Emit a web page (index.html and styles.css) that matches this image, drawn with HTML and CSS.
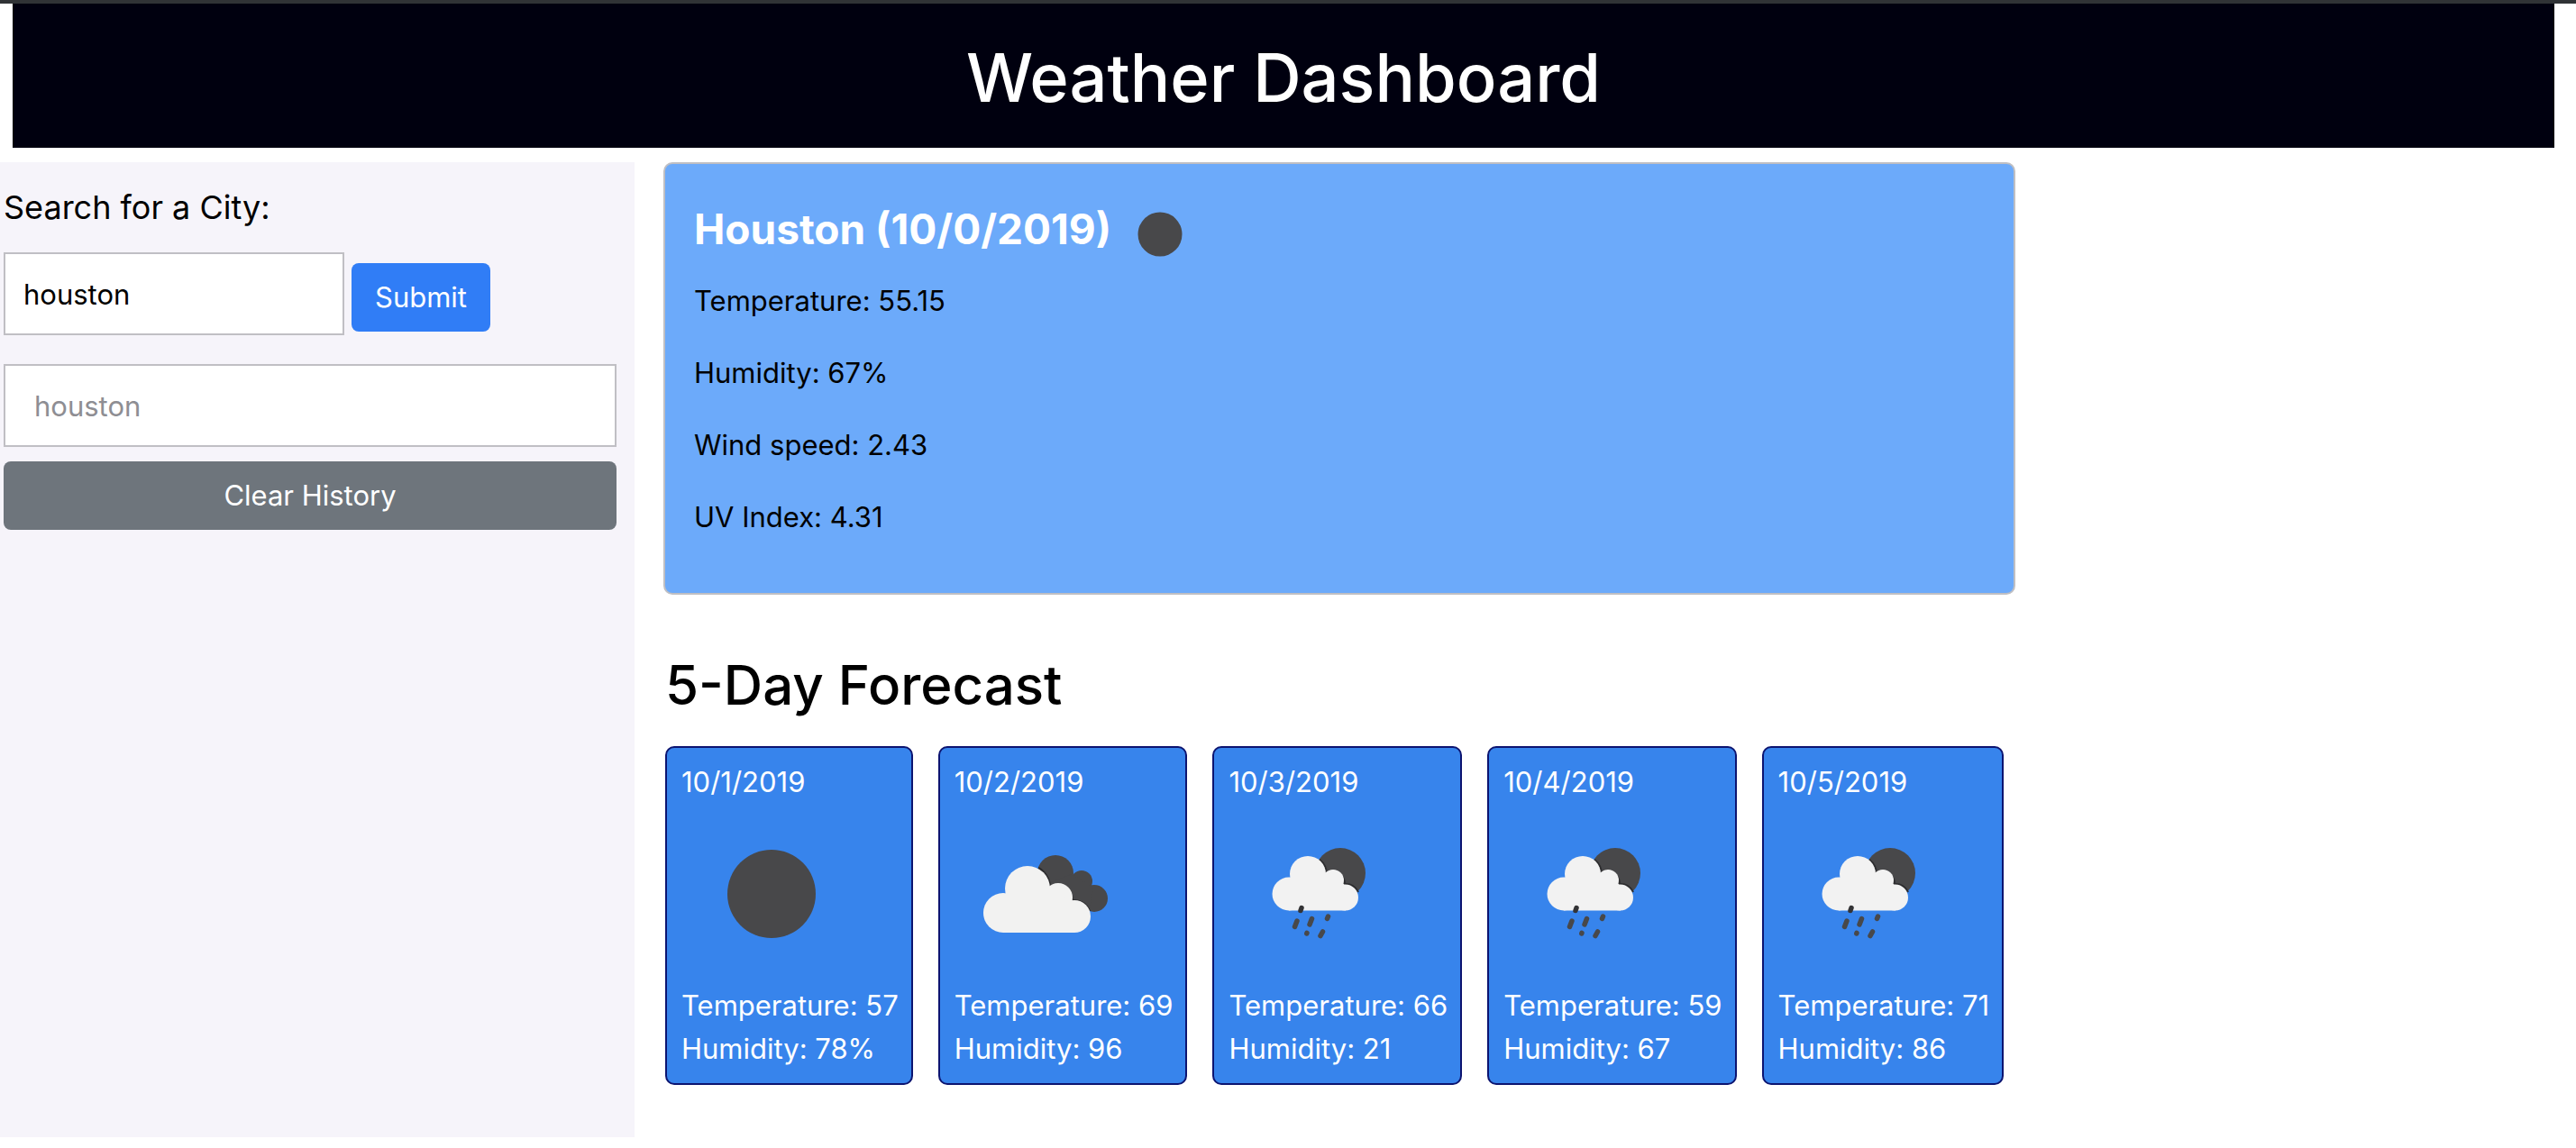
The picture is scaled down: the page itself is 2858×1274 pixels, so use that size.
FILE: index.html
```html
<!DOCTYPE html>
<html lang="en">
<head>
  <meta charset="utf-8">
  <title>Weather Dashboard</title>
  <link rel="stylesheet" href="styles.css">
</head>
<body>
  <svg class="sprite" aria-hidden="true">
    <symbol id="clear" viewBox="0 0 200 200">
      <circle cx="100" cy="100" r="49" fill="#48484a"/>
    </symbol>
    <symbol id="clouds" viewBox="0 0 200 200">
      <g fill="#48484a">
        <circle cx="112" cy="77" r="20"/>
        <circle cx="141" cy="86" r="12"/>
        <circle cx="155" cy="105" r="15"/>
        <path d="M100 90L130 78L146 88L154 94L150 118L130 110Z"/>
      </g>
      <g fill="none" stroke="#2c2c2e" stroke-width="2">
        <path d="M93 71A25 25 0 0 1 106 92A17 17 0 0 1 131 107A19 19 0 0 1 150 119"/>
      </g>
      <g fill="#f2f2f1">
        <circle cx="81" cy="94" r="25"/>
        <circle cx="54" cy="121" r="22"/>
        <circle cx="115" cy="104" r="16"/>
        <circle cx="133" cy="125" r="18"/>
        <path d="M54 143V110L62 99H106L132 108L142 126L133 143Z"/>
      </g>
    </symbol>
    <symbol id="rain" viewBox="0 0 200 200">
      <circle cx="124" cy="77" r="28" fill="#48484a"/>
      <path d="M101 62A21 21 0 0 1 109 78A13 13 0 0 1 129 89A15 15 0 0 1 144 98" fill="none" stroke="#2c2c2e" stroke-width="2"/>
      <g fill="#f2f2f2">
        <circle cx="88" cy="78" r="20"/>
        <circle cx="67" cy="100" r="18.5"/>
        <circle cx="116" cy="85" r="12"/>
        <circle cx="129.500" cy="104" r="14.500"/>
        <path d="M67 118.500V90L70 82H108L128 89L134 104L130 118.500Z"/>
      </g>
      <g stroke="#48484a" stroke-width="5.500" stroke-linecap="round">
        <path d="M81 115.500L80 118.500" stroke="#333335"/>
        <path d="M76 130L73.500 136.500M92.500 127.500L90 134M110.500 125L109.500 127.500M87 143.300L86.800 144M104.500 142L102 146.500"/>
      </g>
    </symbol>
  </svg>

  <header class="header">
    <h1 class="title">Weather Dashboard</h1>
  </header>

  <div class="layout">
    <aside class="sidebar">
      <form class="search">
        <label class="search-label" for="city">Search for a City:</label>
        <div class="search-row">
          <input class="field" id="city" type="text" value="houston">
          <button class="button submit" type="button">Submit</button>
        </div>
      </form>
      <input class="field history" type="text" placeholder="houston" aria-label="Recent city">
      <button class="button clear" type="button">Clear History</button>
    </aside>

    <main class="main">
      <section class="current">
        <h2 class="city">Houston (10/0/2019)
          <svg class="city-icon"><use href="#clear"/></svg>
        </h2>
        <p class="reading">Temperature: 55.15</p>
        <p class="reading">Humidity: 67%</p>
        <p class="reading">Wind speed: 2.43</p>
        <p class="reading">UV Index: 4.31</p>
      </section>

      <section class="forecast">
        <h2 class="forecast-title">5-Day Forecast</h2>
        <div class="days">
          <article class="day">
            <p>10/1/2019</p>
            <svg class="day-icon"><use href="#clear"/></svg>
            <p>Temperature: 57</p>
            <p>Humidity: 78%</p>
          </article>
          <article class="day">
            <p>10/2/2019</p>
            <svg class="day-icon"><use href="#clouds"/></svg>
            <p>Temperature: 69</p>
            <p>Humidity: 96</p>
          </article>
          <article class="day">
            <p>10/3/2019</p>
            <svg class="day-icon"><use href="#rain"/></svg>
            <p>Temperature: 66</p>
            <p>Humidity: 21</p>
          </article>
          <article class="day">
            <p>10/4/2019</p>
            <svg class="day-icon"><use href="#rain"/></svg>
            <p>Temperature: 59</p>
            <p>Humidity: 67</p>
          </article>
          <article class="day">
            <p>10/5/2019</p>
            <svg class="day-icon"><use href="#rain"/></svg>
            <p>Temperature: 71</p>
            <p>Humidity: 86</p>
          </article>
        </div>
      </section>
    </main>
  </div>
</body>
</html>
```
FILE: styles.css
```css
* {
  box-sizing: border-box;
}

body {
  display: flex;
  flex-direction: column;
  min-height: 100vh;
  margin: 0;
  padding-bottom: 12px;
  border-top: 4px solid #303336;
  background: #fff;
  color: #000;
  font-family: Inter, "Liberation Sans", sans-serif;
  font-size: 31px;
  line-height: 48px;
}

h1, h2, p {
  margin: 0;
}

.sprite {
  display: none;
}

.header {
  margin: 0 24px 16px 14px;
  padding: 34px 0 30px;
  background: #00000f;
}

.title {
  color: #fff;
  font-size: 74px;
  font-weight: 500;
  line-height: 96px;
  text-align: center;
}

.layout {
  display: grid;
  flex: 1;
  grid-template-columns: 704fr 32px 1500fr 622fr;
}

.sidebar {
  padding: 20px 20px 20px 4px;
  background: #f6f4fa;
}

.search-label {
  display: block;
  margin-bottom: 20px;
  font-size: 36px;
  line-height: 60px;
}

.search-row {
  display: flex;
  align-items: flex-end;
  gap: 8px;
  margin-bottom: 32px;
}

.field {
  height: 92px;
  border: 2px solid #c0bfc4;
  padding: 0 20px;
  background: #fff;
  color: #000;
  font: inherit;
}

.search-row .field {
  width: 378px;
}

.history {
  display: block;
  width: 100%;
  margin-bottom: 16px;
  padding: 0 32px;
}

.history::placeholder {
  color: #8e8e93;
}

.button {
  height: 76px;
  border: 0;
  border-radius: 8px;
  padding: 0 26px;
  color: #fff;
  font: inherit;
}

.submit {
  margin-bottom: 4px;
  background: #307df6;
}

.clear {
  width: 100%;
  background: #6e757c;
}

.main {
  grid-column: 3;
}

.current {
  margin-bottom: 60px;
  border: 2px solid #bfbfc3;
  border-radius: 10px;
  padding: 40px 32px 28px;
  background: #6caafa;
}

.city {
  display: flex;
  align-items: center;
  gap: 4px;
  margin-bottom: 24px;
  color: #fff;
  font-size: 46px;
  font-weight: 700;
  line-height: 64px;
}

.city-icon {
  width: 100px;
  height: 100px;
  margin: -14px 0 -26px;
}

.reading {
  margin-bottom: 32px;
}

.forecast {
  padding: 0 2px;
}

.forecast-title {
  margin-bottom: 28px;
  font-size: 60px;
  font-weight: 500;
  line-height: 80px;
}

.days {
  display: flex;
  gap: 28px;
}

.day {
  border: 2px solid #0c1470;
  border-radius: 10px;
  padding: 14px 14px 14px 16px;
  background: #3784ec;
  color: #fff;
}

.day-icon {
  display: block;
  width: 200px;
  height: 200px;
}
```
